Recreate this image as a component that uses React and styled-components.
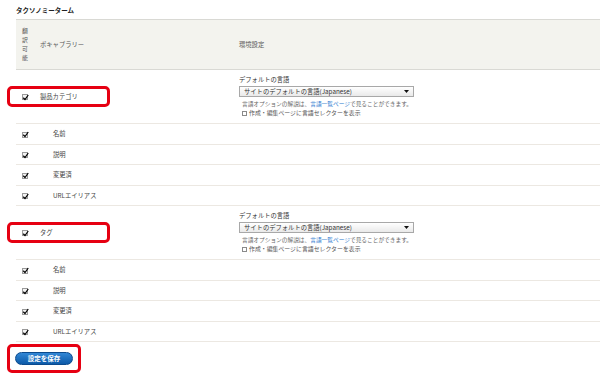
import React from "react"
import styled, { createGlobalStyle } from "styled-components"

const GlobalStyle = createGlobalStyle`
  body {
    margin: 0;
    background: #fff;
    font-family: "Noto Sans CJK JP", "Noto Sans", sans-serif;
    color: #333;
  }
`

const Page = styled.div`
  width: 600px;
  padding-top: 5px;
`

const Title = styled.h2`
  margin: 0 0 4px 16px;
  font-size: 6.5px;
  line-height: 10px;
  font-weight: 700;
  color: #222;
`

const Table = styled.table`
  margin-left: 16px;
  width: 584px;
  border-collapse: collapse;
  table-layout: fixed;
`

const Head = styled.th`
  background: #f3f3ee;
  border-top: 1px solid #d9d9d4;
  border-bottom: 1px solid #d9d9d4;
  height: 49px;
  padding: 0 0 0 ${p => (p.$first ? 0 : 6)}px;
  text-align: ${p => (p.$first ? "center" : "left")};
  vertical-align: middle;
  font-weight: 400;
  font-size: 6.3px;
  color: #555;
`

const Stack = styled.span`
  display: flex;
  flex-direction: column;
  align-items: center;
  gap: 3px;

  span {
    display: block;
    font-size: 5.8px;
    line-height: 6px;
    height: 6px;
  }
`

const Row = styled.tr`
  border-bottom: 1px solid #ece8e2;
`

const Cell = styled.td`
  position: relative;
  height: ${p => (p.$sub ? "19.5px" : "auto")};
  padding: 0 0 0 ${p => (p.$indent ? 19 : p.$first ? 0 : 6)}px;
  text-align: ${p => (p.$first ? "center" : "left")};
  vertical-align: middle;
  font-size: 6.3px;
  color: #444;
`

const Settings = styled.td`
  padding: 6px;
  vertical-align: top;
  font-size: 6.3px;
`

const Check = styled.span`
  display: inline-flex;
  align-items: center;
  justify-content: center;
  width: 6px;
  height: 6px;
  box-sizing: border-box;
  border: 1px solid #9a9a9a;
  background: #f2f2f2;
  vertical-align: middle;

  svg {
    width: 5px;
    height: 5px;
    overflow: visible;
  }
`

const Highlight = styled.span`
  position: absolute;
  left: -9px;
  top: 50%;
  margin-top: -11px;
  width: 103px;
  height: 21px;
  box-sizing: border-box;
  border: 3px solid #e60012;
  border-radius: 5px;
  pointer-events: none;
`

const Label = styled.div`
  line-height: 8px;
  color: #333;
`

const Select = styled.div`
  margin-top: 2px;
  width: 175px;
  height: 11px;
  box-sizing: border-box;
  border: 1px solid #a8a8a8;
  background: linear-gradient(#ffffff, #e9e9e9);
  padding: 0 4px;
  display: flex;
  align-items: center;
  justify-content: space-between;
  color: #333;
  line-height: 9px;
`

const Help = styled.div`
  margin-top: 3px;
  padding-left: 3px;
  line-height: 8px;
  font-size: 5.7px;
  color: #666;

  a {
    color: #2a78cf;
    text-decoration: none;
  }
`

const CheckLine = styled.div`
  margin-top: 1px;
  padding-left: 3px;
  display: flex;
  align-items: center;
  gap: 2px;
  line-height: 8px;
  font-size: 5.9px;
  color: #555;
`

const Box = styled.span`
  width: 5px;
  height: 5px;
  box-sizing: border-box;
  border: 1px solid #8a8a8a;
  background: #fff;
`

const SaveFrame = styled.div`
  display: inline-block;
  margin-left: 7px;
  padding: 5px;
  border: 3px solid #e60012;
  border-radius: 5px;
`

const SaveButton = styled.button`
  display: block;
  width: 58px;
  height: 13px;
  padding: 0;
  border: 1px solid #0b4a8d;
  border-radius: 7px;
  background: linear-gradient(#3287d6, #0c5aa8);
  color: #fff;
  font-family: "Noto Sans CJK JP", serif;
  font-weight: 700;
  font-size: 6.5px;
  line-height: 11px;
`

const Tick = () => (
  <Check>
    <svg viewBox="0 0 10 10">
      <path d="M0.5 5.5 L4 9 L10.5 0" fill="none" stroke="#000" strokeWidth="2.4" />
    </svg>
  </Check>
)

const Arrow = () => (
  <svg width="5" height="3" viewBox="0 0 5 3">
    <path d="M0 0 H5 L2.5 3 Z" fill="#111" />
  </svg>
)

const fields = ["名前", "説明", "変更済", "URLエイリアス"]

const Vocabulary = ({ name }) => (
  <>
    <Row>
      <Cell $first>
        <Highlight />
        <Tick />
      </Cell>
      <Cell>{name}</Cell>
      <Settings>
        <Label>デフォルトの言語</Label>
        <Select>
          <span>サイトのデフォルトの言語(Japanese)</span>
          <Arrow />
        </Select>
        <Help>
          言語オプションの解説は、<a href="#langs">言語一覧ページ</a>で見ることができます。
        </Help>
        <CheckLine>
          <Box />
          作成・編集ページに言語セレクターを表示
        </CheckLine>
      </Settings>
    </Row>
    {fields.map(f => (
      <Row key={f}>
        <Cell $first $sub>
          <Tick />
        </Cell>
        <Cell $sub $indent>
          {f}
        </Cell>
        <Cell $sub />
      </Row>
    ))}
  </>
)

export default function App() {
  return (
    <Page>
      <GlobalStyle />
      <Title>タクソノミーターム</Title>
      <Table>
        <colgroup>
          <col style={{ width: 18 }} />
          <col style={{ width: 199 }} />
          <col />
        </colgroup>
        <thead>
          <tr>
            <Head $first>
              <Stack>
                {"翻訳可能".split("").map(c => (
                  <span key={c}>{c}</span>
                ))}
              </Stack>
            </Head>
            <Head>ボキャブラリー</Head>
            <Head>環境設定</Head>
          </tr>
        </thead>
        <tbody>
          <Vocabulary name="製品カテゴリ" />
          <Vocabulary name="タグ" />
        </tbody>
      </Table>
      <SaveFrame>
        <SaveButton>設定を保存</SaveButton>
      </SaveFrame>
    </Page>
  )
}
